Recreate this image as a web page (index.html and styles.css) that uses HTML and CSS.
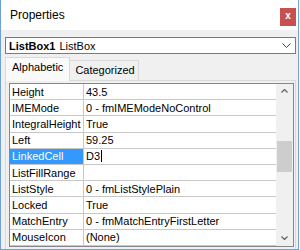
FILE: index.html
```html
<!DOCTYPE html>
<html lang="en">
<head>
    <meta charset="UTF-8">
    <title>Properties</title>
    <link rel="stylesheet" href="styles.css">
</head>
<body>
    <div class="window">
        <div class="titlebar">
            <span class="title">Properties</span>
            <div class="close-btn">x</div>
        </div>
        <div class="panel">
            <div class="combo">
                <span class="obj-name">ListBox1</span>
                <span class="obj-type">ListBox</span>
                <svg class="combo-arrow" width="9" height="5" viewBox="0 0 9 5">
                    <polyline points="0.5,0.5 4.5,4.5 8.5,0.5" fill="none" stroke="#404040" stroke-width="1"/>
                </svg>
            </div>
            <div class="tabs">
                <div class="tab active">Alphabetic</div>
                <div class="tab">Categorized</div>
            </div>
            <div class="tab-page">
                <div class="grid">
                    <table class="props">
                        <tr><td class="name">Height</td><td class="value">43.5</td></tr>
                        <tr><td class="name">IMEMode</td><td class="value">0 - fmIMEModeNoControl</td></tr>
                        <tr><td class="name">IntegralHeight</td><td class="value">True</td></tr>
                        <tr><td class="name">Left</td><td class="value">59.25</td></tr>
                        <tr class="selected"><td class="name">LinkedCell</td><td class="value">D3<span class="caret"></span></td></tr>
                        <tr><td class="name">ListFillRange</td><td class="value"></td></tr>
                        <tr><td class="name">ListStyle</td><td class="value">0 - fmListStylePlain</td></tr>
                        <tr><td class="name">Locked</td><td class="value">True</td></tr>
                        <tr><td class="name">MatchEntry</td><td class="value">0 - fmMatchEntryFirstLetter</td></tr>
                        <tr><td class="name">MouseIcon</td><td class="value">(None)</td></tr>
                    </table>
                    <div class="scrollbar">
                        <svg class="sb-arrow" width="7" height="4" viewBox="0 0 7 4">
                            <polyline points="0.5,3.5 3.5,0.5 6.5,3.5" fill="none" stroke="#606060" stroke-width="1.2"/>
                        </svg>
                        <div class="sb-track">
                            <div class="sb-thumb"></div>
                        </div>
                        <svg class="sb-arrow" width="7" height="4" viewBox="0 0 7 4">
                            <polyline points="0.5,0.5 3.5,3.5 6.5,0.5" fill="none" stroke="#606060" stroke-width="1.2"/>
                        </svg>
                    </div>
                </div>
            </div>
        </div>
    </div>
</body>
</html>
```

FILE: styles.css
```css
body {
    margin: 0;
    font-family: 'Liberation Sans', Arial, sans-serif;
    font-size: 11px;
    color: #000;
    background: #ffffff;
}

.window {
    width: 299px;
    height: 250px;
    box-sizing: border-box;
    border: 1px solid #6fa1d8;
    border-top: none;
    display: flex;
    flex-direction: column;
    background: #f0f0f0;
}

.titlebar {
    height: 30px;
    flex: none;
    background: #ffffff;
    display: flex;
    justify-content: space-between;
    align-items: flex-start;
}

.title {
    font-size: 12px;
    margin: 8px 0 0 9px;
}

.close-btn {
    width: 16px;
    height: 18px;
    margin: 8px 2px 0 0;
    background: #c75050;
    color: #fff;
    font-weight: bold;
    font-size: 10px;
    line-height: 16px;
    text-align: center;
}

.panel {
    flex: 1;
    padding: 7px 2px 0 4px;
    display: flex;
    flex-direction: column;
}

.combo {
    height: 17px;
    box-sizing: border-box;
    border: 1px solid #7a7a7a;
    background: #fff;
    display: flex;
    align-items: center;
    padding: 0 3px 0 3px;
}

.obj-name {
    font-weight: bold;
    margin-right: 4px;
}

.combo-arrow {
    margin-left: auto;
    margin-right: 1px;
}

.tabs {
    display: flex;
    align-items: flex-end;
    margin-top: 3px;
    height: 23px;
}

.tab {
    box-sizing: border-box;
    height: 20px;
    padding: 3px 3px 0 5px;
    border: 1px solid #d9d9d9;
    border-bottom: none;
    border-left: none;
    background: #f0f0f0;
}

.tab.active {
    height: 24px;
    padding: 3px 6px 0 6px;
    background: #fafafa;
    border-left: 1px solid #d9d9d9;
    position: relative;
    z-index: 1;
    margin-bottom: -1px;
}

.tab-page {
    flex: 1;
    border: 1px solid #d9d9d9;
    border-bottom: none;
    padding: 2px 1px 0 3px;
    background: #f0f0f0;
}

.grid {
    height: 164px;
    box-sizing: border-box;
    border: 1px solid #828790;
    background: #fff;
    display: flex;
}

.props {
    border-collapse: collapse;
    width: 266px;
    table-layout: fixed;
}

.props td {
    height: 15px;
    padding: 0 0 0 2px;
    border-bottom: 1px solid #c8c8c8;
    white-space: nowrap;
    overflow: hidden;
}

.props .name {
    width: 71px;
    border-right: 1px solid #c8c8c8;
}

.props .value {
    padding-left: 2px;
}

.props .selected .name {
    background: #3399ff;
    color: #fff;
}

.caret {
    display: inline-block;
    width: 1px;
    height: 12px;
    background: #000;
    vertical-align: -2px;
    margin-left: 1px;
}

.scrollbar {
    width: 17px;
    flex: none;
    background: #f0f0f0;
    display: flex;
    flex-direction: column;
    align-items: center;
}

.sb-arrow {
    margin: 5px 0 6px;
}

.sb-track {
    flex: 1;
    width: 100%;
    position: relative;
}

.sb-thumb {
    position: absolute;
    left: 1px;
    right: 1px;
    top: 42px;
    height: 31px;
    background: #cdcdcd;
}
```
